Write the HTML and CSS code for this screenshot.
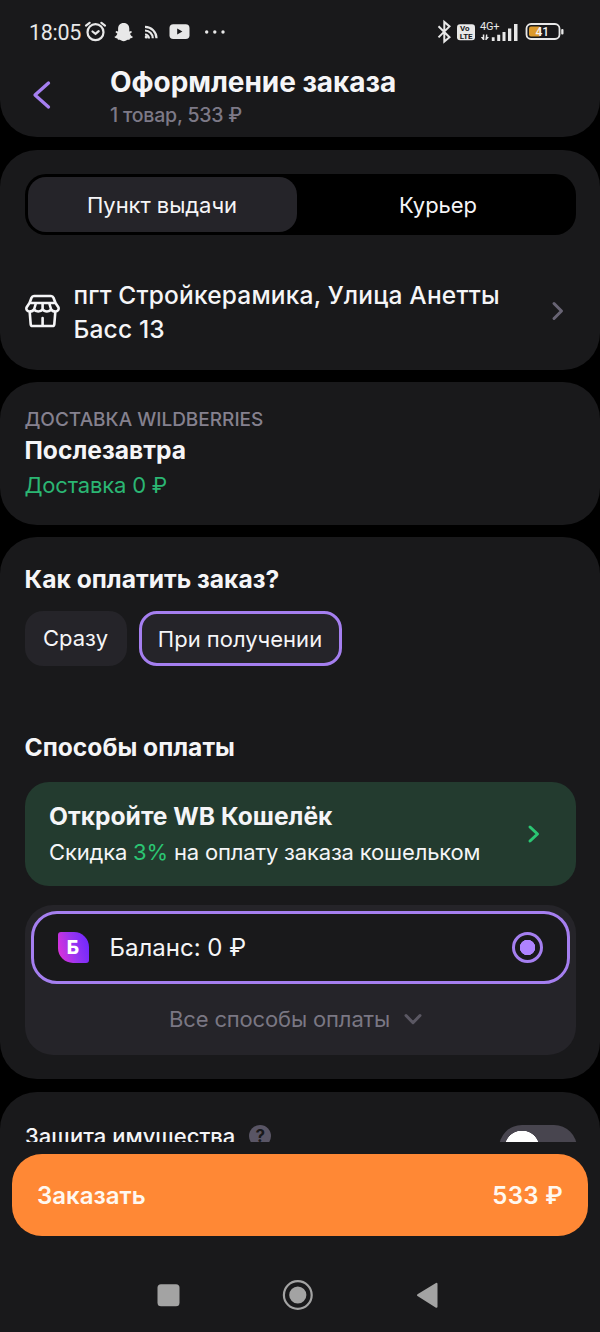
FILE: index.html
```html
<!DOCTYPE html>
<html lang="ru">
<head>
<meta charset="utf-8">
<title>Оформление заказа</title>
<link rel="stylesheet" href="styles.css">
</head>
<body>
<div class="screen">
  <header class="header">
    <div class="status">
      <span class="clock">18:05</span>
      <svg class="status-left" width="150" height="28" viewBox="84 18 150 28">
        <g fill="none" stroke="#e8e8e8" stroke-width="2.2" stroke-linecap="round">
          <circle cx="95.500" cy="32.200" r="8"/>
          <path d="M92.500 31.500l3 2.400 3.200-2.800M86 25.600l3.600-2.800M105 25.600l-3.600-2.800"/>
        </g>
        <path fill="#e8e8e8" d="M123.700 23c3.800 0 5.600 2.700 5.600 5.800v2.700l2-.5.600 1.200-1.900 1.500c.6 1.600 1.700 2.600 3 3.100-.4 1.300-1.800 1.500-3 1.700l-.6 1.300c-2-.2-2.500.2-3.300.7-1.500 1.100-3.300 1.100-4.800 0-.8-.5-1.300-.9-3.300-.7l-.6-1.300c-1.200-.2-2.600-.4-3-1.700 1.300-.5 2.400-1.500 3-3.100l-1.900-1.500.6-1.200 2 .5v-2.700c0-3.100 1.800-5.800 5.600-5.800z"/>
        <g fill="none" stroke="#e8e8e8" stroke-width="2.200">
          <path d="M145 26.800a11.500 11.500 0 0 1 11.500 11.500M145 30.500a7.800 7.800 0 0 1 7.800 7.800"/>
          <path d="M145 34.500a4 4 0 0 1 4 4"/>
        </g>
        <circle cx="146.300" cy="37" r="1.600" fill="#e8e8e8"/>
        <rect x="169.500" y="24.300" width="20" height="14.700" rx="3.800" fill="#e8e8e8"/>
        <path d="M177.200 28.600v6l5.200-3z" fill="#19191b"/>
        <g fill="#e8e8e8"><circle cx="206.700" cy="32" r="1.700"/><circle cx="214.800" cy="32" r="1.700"/><circle cx="223" cy="32" r="1.700"/></g>
      </svg>
      <svg class="status-right" width="130" height="28" viewBox="436 18 130 28">
        <path d="M438.500 26.200l11 11-5.200 4.400V22l5.200 4.400-11 11" fill="none" stroke="#e8e8e8" stroke-width="2"/>
        <rect x="457" y="24.200" width="18" height="16" rx="3" fill="#e8e8e8"/>
        <text class="volte" x="460" y="31.400">Vo</text>
        <text class="volte" x="459.800" y="38.800" textLength="12.800">LTE</text>
        <text class="net" x="480" y="30" textLength="19.500">4G+</text>
        <path fill="#e8e8e8" d="M480.800 37l2 0v-2.500h1.500V40h-1.300zM486 34.500h1.300V37H489l-2.500 3-1.200 0zM491.800 37.200h2.800V41h-2.800zM497.200 34.700h3V41h-3zM502.500 32h3v9h-3zM508 28.500h3.300V41H508zM514 24h3.500v17H514z"/>
        <rect x="526.500" y="24" width="33" height="15" rx="4.500" fill="none" stroke="#e8e8e8" stroke-width="1.800"/>
        <rect x="529" y="26.500" width="12" height="10" rx="2" fill="#dc9a2c"/>
        <rect x="561.200" y="29" width="2.300" height="5.500" rx="1" fill="#e8e8e8"/>
        <text class="charge" x="535.500" y="36.400">41</text>
      </svg>
    </div>
    <div class="titlebar">
      <svg class="back" width="20" height="30" viewBox="0 0 20 30"><path d="M17.500 3L4 15 17.500 27" fill="none" stroke="#a57ff0" stroke-width="3.300" stroke-linecap="round" stroke-linejoin="round"/></svg>
      <div>
        <h1 class="title">Оформление заказа</h1>
        <p class="subtitle">1 товар, 533 ₽</p>
      </div>
    </div>
  </header>

  <section class="card pickup">
    <div class="tabs">
      <div class="tab tab-active"><span>Пункт выдачи</span></div>
      <div class="tab"><span>Курьер</span></div>
    </div>
    <div class="address">
      <svg width="36" height="34" viewBox="0 0 36 34" fill="none" stroke="#f5f5f7" stroke-width="2.600" stroke-linejoin="round" stroke-linecap="round">
        <path d="M4.500 9L6.500 3.700Q7.200 2 9 2h17q1.800 0 2.500 1.700L30.500 9l3 4.500c.6 2.200-.8 4-3 4-2 0-3.500-.6-4.300-2.200-.9 1.400-2.300 2.200-4.200 2.200s-3.500-.8-4.400-2.200c-.9 1.400-2.500 2.200-4.400 2.200s-3.300-.8-4.200-2.200C8.200 16.900 6.500 17.500 4.500 17.500c-2.200 0-3.600-1.800-3-4zM4.500 9h26M11 9l-1.800 6M17.600 9v6M24.200 9l1.800 6M4.700 18l1 12.300q.2 1.700 2 1.700h19.600q1.800 0 2-1.700l1-12.300M17.600 24V32"/>
      </svg>
      <p class="address-text">пгт Стройкерамика, Улица Анетты<br>Басс 13</p>
      <svg class="chevron" width="14" height="20" viewBox="0 0 14 20"><path d="M3 2.500l7.500 7.500L3 17.500" fill="none" stroke="#686474" stroke-width="3" stroke-linecap="round" stroke-linejoin="round"/></svg>
    </div>
  </section>

  <section class="card delivery">
    <p class="seller">ДОСТАВКА WILDBERRIES</p>
    <h2 class="heading">Послезавтра</h2>
    <p class="price">Доставка 0 ₽</p>
  </section>

  <section class="card payment">
    <h2 class="heading">Как оплатить заказ?</h2>
    <div class="chips">
      <div class="chip chip-now"><span>Сразу</span></div>
      <div class="chip chip-later"><span>При получении</span></div>
    </div>
    <h2 class="heading methods-title">Способы оплаты</h2>
    <div class="promo">
      <div>
        <h3 class="heading promo-title">Откройте WB Кошелёк</h3>
        <p class="promo-text">Скидка <span class="green">3%</span> на оплату заказа кошельком</p>
      </div>
      <svg width="14" height="20" viewBox="0 0 14 20"><path d="M3 3l7.500 7L3 17" fill="none" stroke="#2bc673" stroke-width="3" stroke-linecap="round" stroke-linejoin="round"/></svg>
    </div>
    <div class="methods">
      <div class="method">
        <span class="logo">Б</span>
        <span class="balance">Баланс: 0 ₽</span>
        <span class="radio"></span>
      </div>
      <div class="all">
        <span class="all-text">Все способы оплаты</span>
        <svg width="20" height="14" viewBox="0 0 20 14"><path d="M3 3.500l7 7.200 7-7.200" fill="none" stroke="#5b5863" stroke-width="3" stroke-linecap="round" stroke-linejoin="round"/></svg>
      </div>
    </div>
  </section>

  <section class="card protect">
    <span class="protect-text">Защита имущества</span>
    <span class="help">?</span>
    <span class="switch"></span>
  </section>

  <footer class="footer">
    <div class="order"><span>Заказать</span><span class="order-sum">533 ₽</span></div>
    <svg class="nav" width="600" height="96" viewBox="0 0 600 96">
      <rect x="157.500" y="48.300" width="22" height="22" rx="3.500" fill="#a3a3a3"/>
      <circle cx="297.800" cy="59" r="13.900" fill="none" stroke="#a3a3a3" stroke-width="2.200"/>
      <circle cx="297.800" cy="59" r="8.600" fill="#a3a3a3"/>
      <path d="M418 59.200L436.500 47.800V70.800Z" fill="#a3a3a3" stroke="#a3a3a3" stroke-width="2" stroke-linejoin="round"/>
    </svg>
  </footer>
</div>
</body>
</html>
```
FILE: styles.css
```css
* { box-sizing: border-box; margin: 0; padding: 0; }
body { background: #000; font-family: Inter, "Noto Sans", sans-serif; color: #f5f5f7; font-size: 22px; }
svg { display: block; flex: none; }
.screen { width: 600px; height: 1332px; display: flex; flex-direction: column; background: #000; overflow: hidden; white-space: nowrap; }
.header { height: 137px; flex: none; background: #19191b; border-radius: 0 0 37px 37px; }
.status { height: 64px; padding: 18px 0 0 29px; display: flex; }
.clock { font: 400 21.500px/29px Roboto, sans-serif; color: #e8e8e8; width: 55px; letter-spacing: -0.300px; }
.status-right { margin-left: 202px; }
.volte { font: 700 8px Roboto, sans-serif; fill: #19191b; }
.net { font: 400 11px Roboto, sans-serif; fill: #e8e8e8; }
.charge { font: 500 12px Roboto, sans-serif; fill: #f2f2f2; }
.titlebar { display: flex; padding-left: 31px; }
.back { margin: 16px 59px 0 0; }
.title { font-size: 28px; font-weight: 700; line-height: 37px; letter-spacing: -0.050px; }
.subtitle { font-size: 19.500px; font-weight: 500; line-height: 28px; letter-spacing: -0.200px; color: #7d7987; }

.card { flex: none; margin-top: 12px; background: #19191b; border-radius: 37px; }
.pickup { height: 220px; margin-top: 13px; padding: 24px 24.500px 0; }
.tabs { height: 61px; background: #000; border-radius: 21px; padding: 3px; display: grid; grid-template-columns: 1fr 1fr; column-gap: 7px; letter-spacing: -0.050px; }
.tab { display: flex; align-items: center; justify-content: center; border-radius: 18px; }
.tab-active { background: #252429; }
.address { display: flex; padding-top: 44px; }
.address > svg { margin-top: 15px; }
.address-text { font-size: 24.500px; font-weight: 500; line-height: 33.500px; letter-spacing: 0.180px; margin-left: 13px; flex: 1; }
.address .chevron { margin: 22px 11px 0 0; }

.delivery { height: 143px; padding: 25px 24.500px; }
.seller { font-size: 19px; font-weight: 500; line-height: 26px; color: #85818f; }
.heading { font-size: 24.600px; font-weight: 700; line-height: 34px; }
.price { color: #2bb673; line-height: 36px; letter-spacing: -0.180px; }

.payment { height: 542px; padding: 25px 24.500px 0; }
.chips { display: flex; gap: 12px; margin-top: 15px; }
.chip { height: 55px; border-radius: 18px; background: #252429; display: flex; align-items: center; justify-content: center; padding-bottom: 1px; }
.chip-now { width: 102px; }
.chip-later { width: 203px; border: 3px solid #a57ff0; padding-bottom: 0; }
.methods-title { margin-top: 64px; }
.promo { margin-top: 18px; height: 104px; border-radius: 24px; background: #233b2f; display: flex; align-items: center; justify-content: space-between; padding: 0 35px 0 24.500px; }
.promo-title { line-height: 36px; }
.promo-text { line-height: 36px; letter-spacing: -0.170px; }
.green { color: #2bc673; }
.methods { margin-top: 19px; height: 150px; border-radius: 28px; background: #252429; padding: 6px 6px 0; }
.method { height: 73px; border: 3px solid #a57ff0; border-radius: 26px; background: #19191b; display: flex; align-items: center; padding: 0 24px; }
.logo { width: 31px; height: 31px; border-radius: 3px 15px 3px 15px; background: linear-gradient(75deg, #e432d6 0%, #9a35f0 50%, #6a26ff 100%); color: #fff; font-size: 19px; font-weight: 800; line-height: 31px; text-align: center; }
.balance { font-size: 24px; margin-left: 21px; flex: 1; }
.radio { width: 31px; height: 31px; border: 3px solid #a57ff0; border-radius: 50%; background: radial-gradient(circle, #ae83ff 0 7.500px, transparent 8px); }
.all { height: 69px; padding-left: 138.500px; display: flex; align-items: center; color: #7a7783; letter-spacing: -0.150px; }
.all svg { margin-left: 13px; }

.protect { height: 50px; margin-top: 13px; border-radius: 37px 37px 0 0; overflow: hidden; display: flex; padding: 33px 23.500px 0 25px; }
.protect-text { line-height: 23px; font-weight: 500; }
.help { width: 22px; height: 22px; border-radius: 50%; background: #595565; color: #19191b; font-size: 17px; font-weight: 700; line-height: 22px; text-align: center; margin-left: 14px; }
.switch { margin-left: auto; width: 78px; height: 46px; border-radius: 23px; background: radial-gradient(circle at 23px 23px, #fff 0 17px, transparent 17.500px) #48454f; }
.footer { flex: 1; background: #19191b; padding-top: 12px; }
.order { margin: 0 12px; height: 82px; border-radius: 30px; background: #ff8835; display: flex; align-items: center; justify-content: space-between; padding: 0 25px; font-size: 24px; font-weight: 600; color: #fff8f0; }
.order-sum { letter-spacing: 0.300px; }
```
